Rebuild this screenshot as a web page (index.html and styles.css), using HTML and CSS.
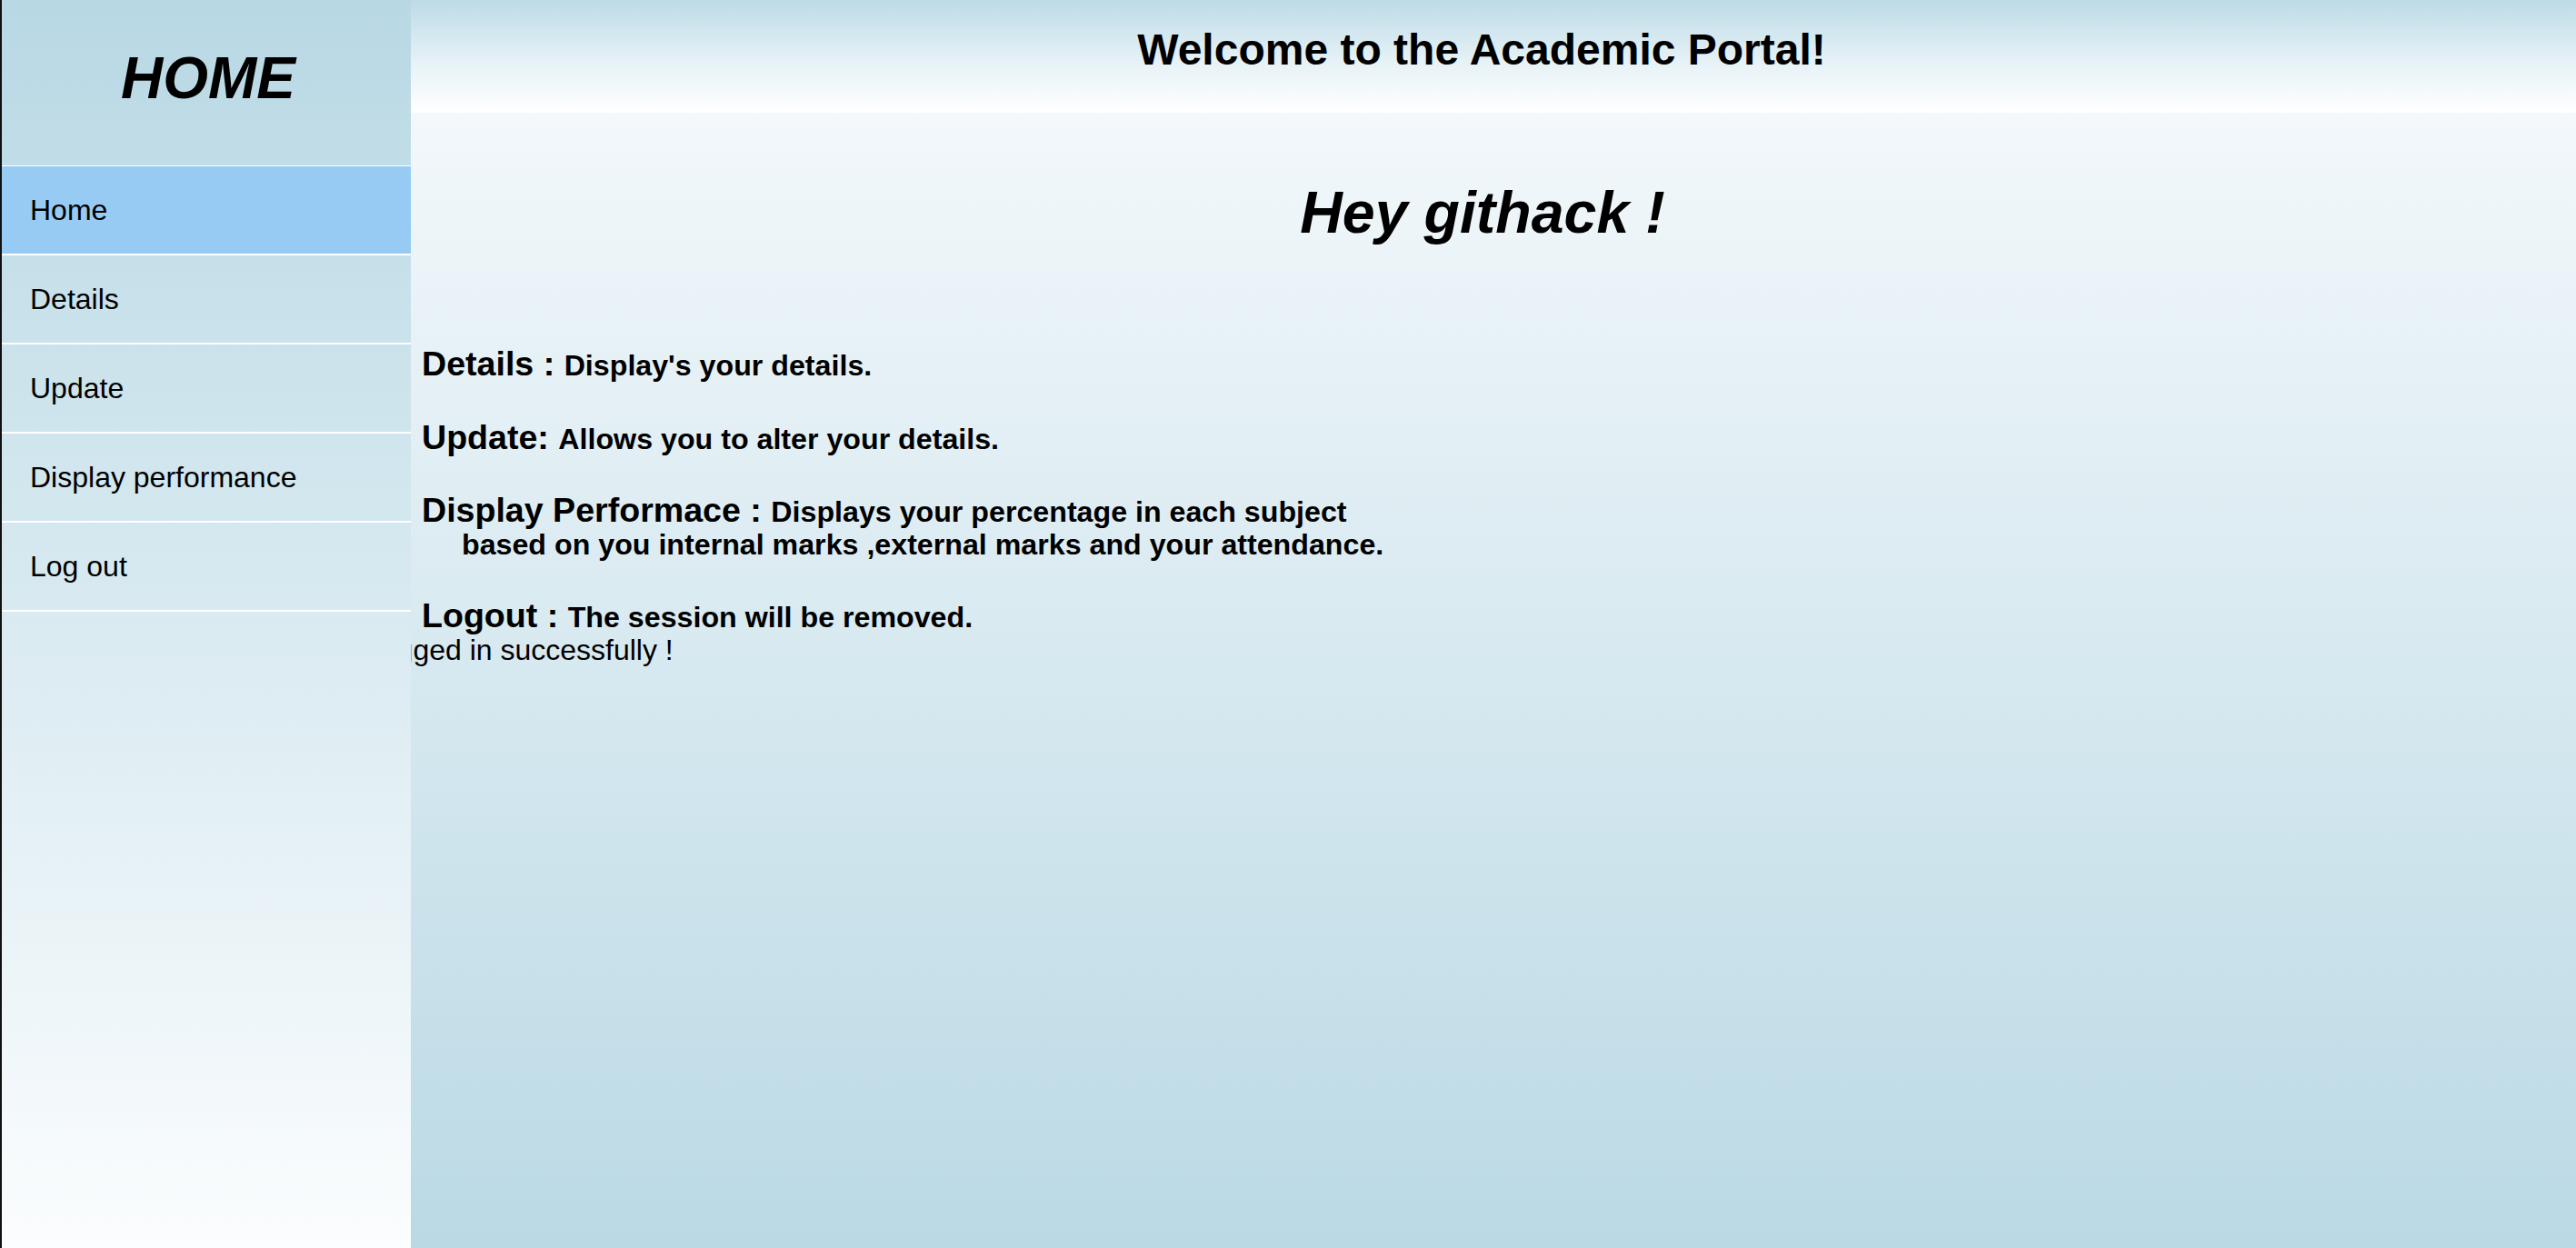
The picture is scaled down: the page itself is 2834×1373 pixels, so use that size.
FILE: index.html
```html
<!DOCTYPE html>
<html lang="en">
<head>
<meta charset="utf-8">
<title>Academic Portal</title>
<link rel="stylesheet" href="styles.css">
</head>
<body>
<div class="page">
  <aside class="sidebar">
    <div class="brand">HOME</div>
    <ul class="nav">
      <li class="nav-item active">Home</li>
      <li class="nav-item">Details</li>
      <li class="nav-item">Update</li>
      <li class="nav-item">Display performance</li>
      <li class="nav-item">Log out</li>
    </ul>
  </aside>
  <main class="main">
    <header class="banner">
      <h1 class="banner-title">Welcome to the Academic Portal!</h1>
    </header>
    <section class="content">
      <h1 class="greet">Hey githack !</h1>
      <h3 class="topic">Details : <span class="desc">Display's your details.</span></h3>
      <h3 class="topic">Update: <span class="desc">Allows you to alter your details.</span></h3>
      <h3 class="topic">Display Performace : <span class="desc">Displays your percentage in each subject</span><span class="desc cont">based on you internal marks ,external marks and your attendance.</span></h3>
      <h3 class="topic last">Logout : <span class="desc">The session will be removed.</span></h3>
      <p class="flash">Logged in successfully !</p>
    </section>
  </main>
</div>
</body>
</html>
```

FILE: styles.css
```css
html, body {
  margin: 0;
  padding: 0;
  height: 100%;
}

body {
  font-family: "Liberation Sans", Arial, Helvetica, sans-serif;
  color: #000;
  background: #eef6f9;
}

.page {
  display: flex;
  height: 100vh;
  border-left: 2px solid #111;
  box-sizing: border-box;
}

.sidebar {
  width: 450px;
  flex: none;
  background: linear-gradient(to bottom, #b8d8e4 0%, #fbfdfe 100%);
  position: relative;
  z-index: 1;
}

.brand {
  height: 183px;
  box-sizing: border-box;
  padding: 49px 0 0 4px;
  border-bottom: 1px solid #ffffff;
  text-align: center;
  font-size: 64px;
  font-weight: bold;
  font-style: italic;
  line-height: normal;
}

.nav {
  list-style: none;
  margin: 0;
  padding: 0;
}

.nav-item {
  height: 96px;
  line-height: 96px;
  padding-left: 31px;
  font-size: 32px;
  border-bottom: 2px solid #ffffff;
}

.nav-item.active {
  background: #98cbf4;
}

.main {
  flex: 1;
  min-width: 0;
  display: flex;
  flex-direction: column;
  overflow: hidden;
  background: linear-gradient(to bottom, #f8fbfd 0%, #bad9e5 100%);
}

.banner {
  height: 124px;
  flex: none;
  box-sizing: border-box;
  padding: 27px 36px 0 10px;
  background: linear-gradient(to bottom, #bddbe6 0%, #e6f2f7 55%, #ffffff 100%);
}

.banner-title {
  margin: 0;
  text-align: center;
  font-size: 48px;
  font-weight: bold;
  line-height: normal;
}

.content {
  padding: 0 36px 0 12px;
}

.greet {
  margin: 73px 0 108px;
  text-align: center;
  font-size: 64.5px;
  font-weight: bold;
  font-style: italic;
  line-height: normal;
}

.topic {
  margin: 0 0 37.5px;
  font-size: 37.6px;
  font-weight: bold;
  line-height: normal;
}

.topic.last {
  margin-bottom: 0;
}

.desc {
  font-size: 32.2px;
}

.cont {
  display: block;
  padding-left: 44px;
  margin-top: -2px;
}

.flash {
  margin: -2px 0 0 -63px;
  font-size: 32px;
  line-height: normal;
  white-space: nowrap;
}
```
